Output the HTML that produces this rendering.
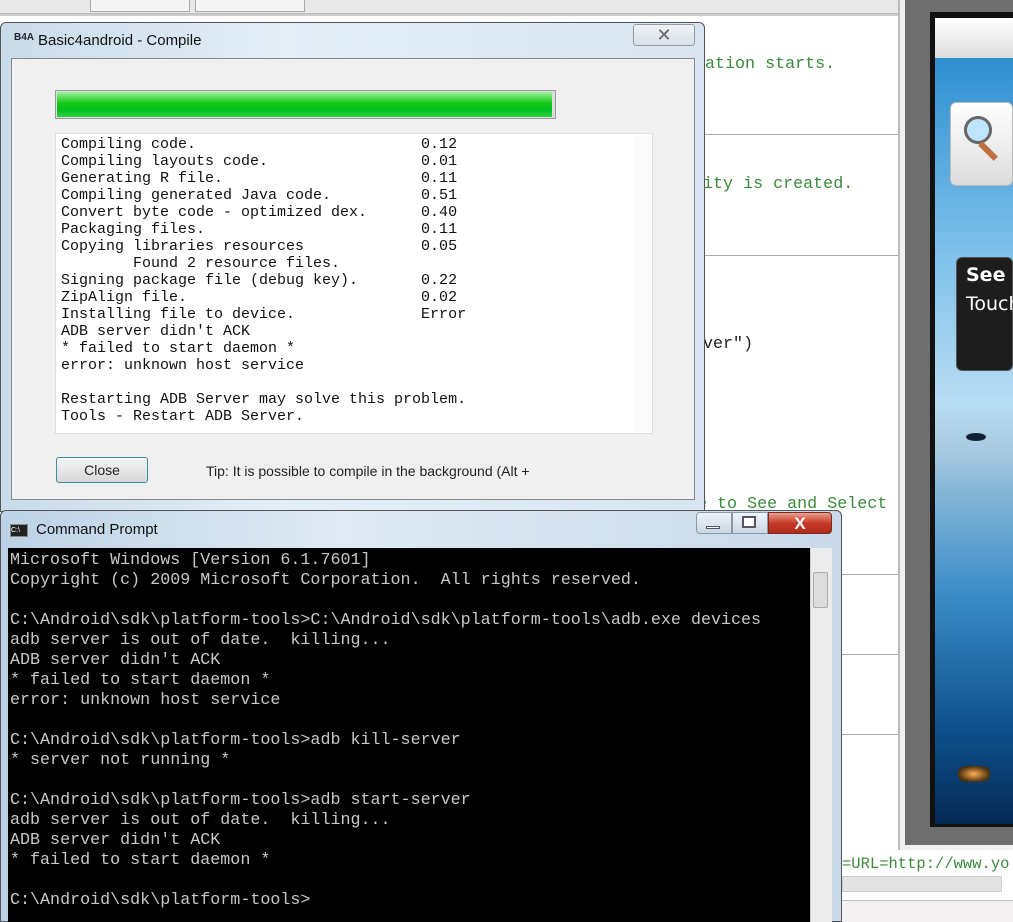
<!DOCTYPE html>
<html><head><style>
body{margin:0;width:1013px;height:922px;overflow:hidden;background:#fff;position:relative;font-family:"Liberation Sans",sans-serif}
div{position:absolute;box-sizing:border-box}
pre{margin:0;position:absolute}
.code{font-family:"Liberation Mono",monospace;font-size:16.7px;color:#3a8a3a}
</style></head><body>
<div style="left:0;top:0;width:900px;height:14px;background:#e8e8e8;border-bottom:1px solid #bbb"></div>
<div style="left:90px;top:0;width:100px;height:12px;border:1px solid #aaa;border-top:none;background:#f4f4f4"></div>
<div style="left:195px;top:0;width:110px;height:12px;border:1px solid #aaa;border-top:none;background:#f4f4f4"></div>
<div style="left:0;top:14px;width:900px;height:2px;background:#ccc"></div>
<div style="left:700px;top:134px;width:200px;height:1px;background:#aaa"></div>
<div style="left:700px;top:255px;width:200px;height:1px;background:#aaa"></div>
<div style="left:840px;top:574px;width:60px;height:1px;background:#aaa"></div>
<div style="left:840px;top:654px;width:60px;height:1px;background:#aaa"></div>
<div style="left:840px;top:734px;width:60px;height:1px;background:#aaa"></div>
<div style="left:898px;top:0;width:2px;height:850px;background:#bbb"></div>
<pre class="code" style="left:705px;top:55px">ation starts.</pre>
<pre class="code" style="left:693px;top:175px">vity is created.</pre>
<pre class="code" style="left:693px;top:335px;color:#222">over")
)</pre>
<pre class="code" style="left:687px;top:495px">le to See and Select</pre>
<pre class="code" style="left:842px;top:855px;font-size:15.5px">=URL=http://www.yo</pre>
<div style="left:842px;top:876px;width:160px;height:16px;background:#e4e4e4;border:1px solid #ccc"></div>
<div style="left:842px;top:900px;width:171px;height:22px;background:#f2f0f0;border-top:1px solid #bbb"></div>
<div style="left:900px;top:0;width:113px;height:850px;background:#f0f0f0"></div>
<div style="left:905px;top:0;width:108px;height:845px;background:#6e6e6e"></div>
<div style="left:930px;top:12px;width:83px;height:815px;background:#111"></div>
<div style="left:935px;top:18px;width:78px;height:40px;background:linear-gradient(#fff,#dcdcdc)"></div>
<div style="left:935px;top:58px;width:78px;height:766px;background:linear-gradient(#2e8fd0 0%,#7cc0ea 25%,#b8dcf2 45%,#a5c8de 52%,#88b8d8 56%,#3a8cc8 70%,#0d4f8a 88%,#062a55 100%)"></div>
<div style="left:950px;top:102px;width:63px;height:84px;background:linear-gradient(#fff,#ddd);border-radius:6px;border:1px solid #bbb"></div>
<div style="left:964px;top:116px;width:28px;height:28px;border:3px solid #666;border-radius:50%;background:#bfe4fb"></div>
<div style="left:985px;top:140px;width:6px;height:22px;background:#c07040;transform:rotate(-45deg)"></div>
<div style="left:956px;top:257px;width:57px;height:114px;background:#1d1d1d;border-radius:6px;border:1px solid #555"></div>
<div style="left:966px;top:264px;color:#fff;font-weight:bold;font-size:19px;font-family:'DejaVu Sans',sans-serif;white-space:nowrap">See a</div>
<div style="left:966px;top:293px;color:#fff;font-size:19px;font-family:'DejaVu Sans',sans-serif;white-space:nowrap">Touch</div>
<div style="left:966px;top:433px;width:20px;height:8px;background:#123;border-radius:50%"></div>
<div style="left:958px;top:766px;width:32px;height:16px;background:radial-gradient(#ffb050,#4a3010 70%,transparent);border-radius:6px"></div>
<div style="left:0;top:22px;width:705px;height:490px;background:linear-gradient(90deg,#c9dbea,#e3eef7 40%,#d7e6f2);border:1px solid #555;border-radius:6px 6px 0 0"></div>
<div style="left:14px;top:32px;font-size:10px;font-weight:bold;color:#223">B4A</div>
<div style="left:38px;top:32px;font-size:15px;color:#111">Basic4android - Compile</div>
<div style="left:633px;top:24px;width:62px;height:22px;border:1px solid #999;border-radius:3px;background:linear-gradient(#f0f4f8,#d8e0e8);text-align:center;font-size:18px;color:#666;line-height:20px">✕</div>
<div style="left:11px;top:58px;width:684px;height:442px;background:#f0f0f0;border:1px solid #888"></div>
<div style="left:55px;top:90px;width:501px;height:29px;background:#ddd;border:1px solid #999"></div>
<div style="left:57px;top:92px;width:495px;height:25px;background:linear-gradient(#9ef09e,#14c814 45%,#00c020 70%,#30d040);"></div>
<div style="left:55px;top:133px;width:598px;height:301px;background:#fff;border:1px solid #ddd"></div>
<div style="left:634px;top:135px;width:17px;height:297px;background:#fafafa"></div>
<pre style="left:61px;top:136px;font-family:'Liberation Mono',monospace;font-size:15px;line-height:17px;color:#111">Compiling code.                         0.12
Compiling layouts code.                 0.01
Generating R file.                      0.11
Compiling generated Java code.          0.51
Convert byte code - optimized dex.      0.40
Packaging files.                        0.11
Copying libraries resources             0.05
        Found 2 resource files.
Signing package file (debug key).       0.22
ZipAlign file.                          0.02
Installing file to device.              Error
ADB server didn't ACK
* failed to start daemon *
error: unknown host service

Restarting ADB Server may solve this problem.
Tools - Restart ADB Server.</pre>
<div style="left:56px;top:457px;width:92px;height:26px;border:1px solid #3c8fa0;border-radius:3px;background:linear-gradient(#f4f4f4,#d8d8d8);text-align:center;font-size:14px;line-height:24px;color:#222">Close</div>
<div style="left:206px;top:463px;font-size:14px;color:#222">Tip: It is possible to compile in the background (Alt +</div>
<div style="left:0;top:510px;width:842px;height:412px;background:linear-gradient(90deg,#bcd2e6,#dfeaf4 40%,#c7d9ea);border:1px solid #555;border-radius:6px 6px 0 0"></div>
<div style="left:10px;top:524px;width:18px;height:13px;background:#222;border:1px solid #888;color:#fff;font-size:7px;line-height:12px">C:\</div>
<div style="left:36px;top:521px;font-size:15px;color:#111">Command Prompt</div>
<div style="left:696px;top:512px;width:36px;height:22px;border:1px solid #8899aa;background:linear-gradient(#eef3f8,#cdd8e4);border-radius:4px 0 0 4px"></div>
<div style="left:706px;top:526px;width:14px;height:3px;background:#fff;border:1px solid #556"></div>
<div style="left:732px;top:512px;width:36px;height:22px;border:1px solid #8899aa;background:linear-gradient(#eef3f8,#cdd8e4)"></div>
<div style="left:742px;top:516px;width:14px;height:12px;border:2px solid #556;background:#fff"></div>
<div style="left:768px;top:512px;width:64px;height:22px;border:1px solid #7a2a20;background:linear-gradient(#e8a090,#c83a28 50%,#b02a18);border-radius:0 4px 4px 0;color:#fff;text-align:center;font-weight:bold;font-size:17px;line-height:21px">X</div>
<div style="left:8px;top:548px;width:802px;height:374px;background:#000"></div>
<div style="left:810px;top:548px;width:22px;height:374px;background:#ececec;border-left:1px solid #ccc"></div>
<div style="left:813px;top:572px;width:15px;height:36px;background:#dcdcdc;border:1px solid #aaa;border-radius:2px"></div>
<pre style="left:10px;top:551px;font-family:'Liberation Mono',monospace;font-size:16.7px;line-height:20px;color:#c8c8c8">Microsoft Windows [Version 6.1.7601]
Copyright (c) 2009 Microsoft Corporation.  All rights reserved.

C:\Android\sdk\platform-tools>C:\Android\sdk\platform-tools\adb.exe devices
adb server is out of date.  killing...
ADB server didn't ACK
* failed to start daemon *
error: unknown host service

C:\Android\sdk\platform-tools>adb kill-server
* server not running *

C:\Android\sdk\platform-tools>adb start-server
adb server is out of date.  killing...
ADB server didn't ACK
* failed to start daemon *

C:\Android\sdk\platform-tools></pre>
</body></html>
